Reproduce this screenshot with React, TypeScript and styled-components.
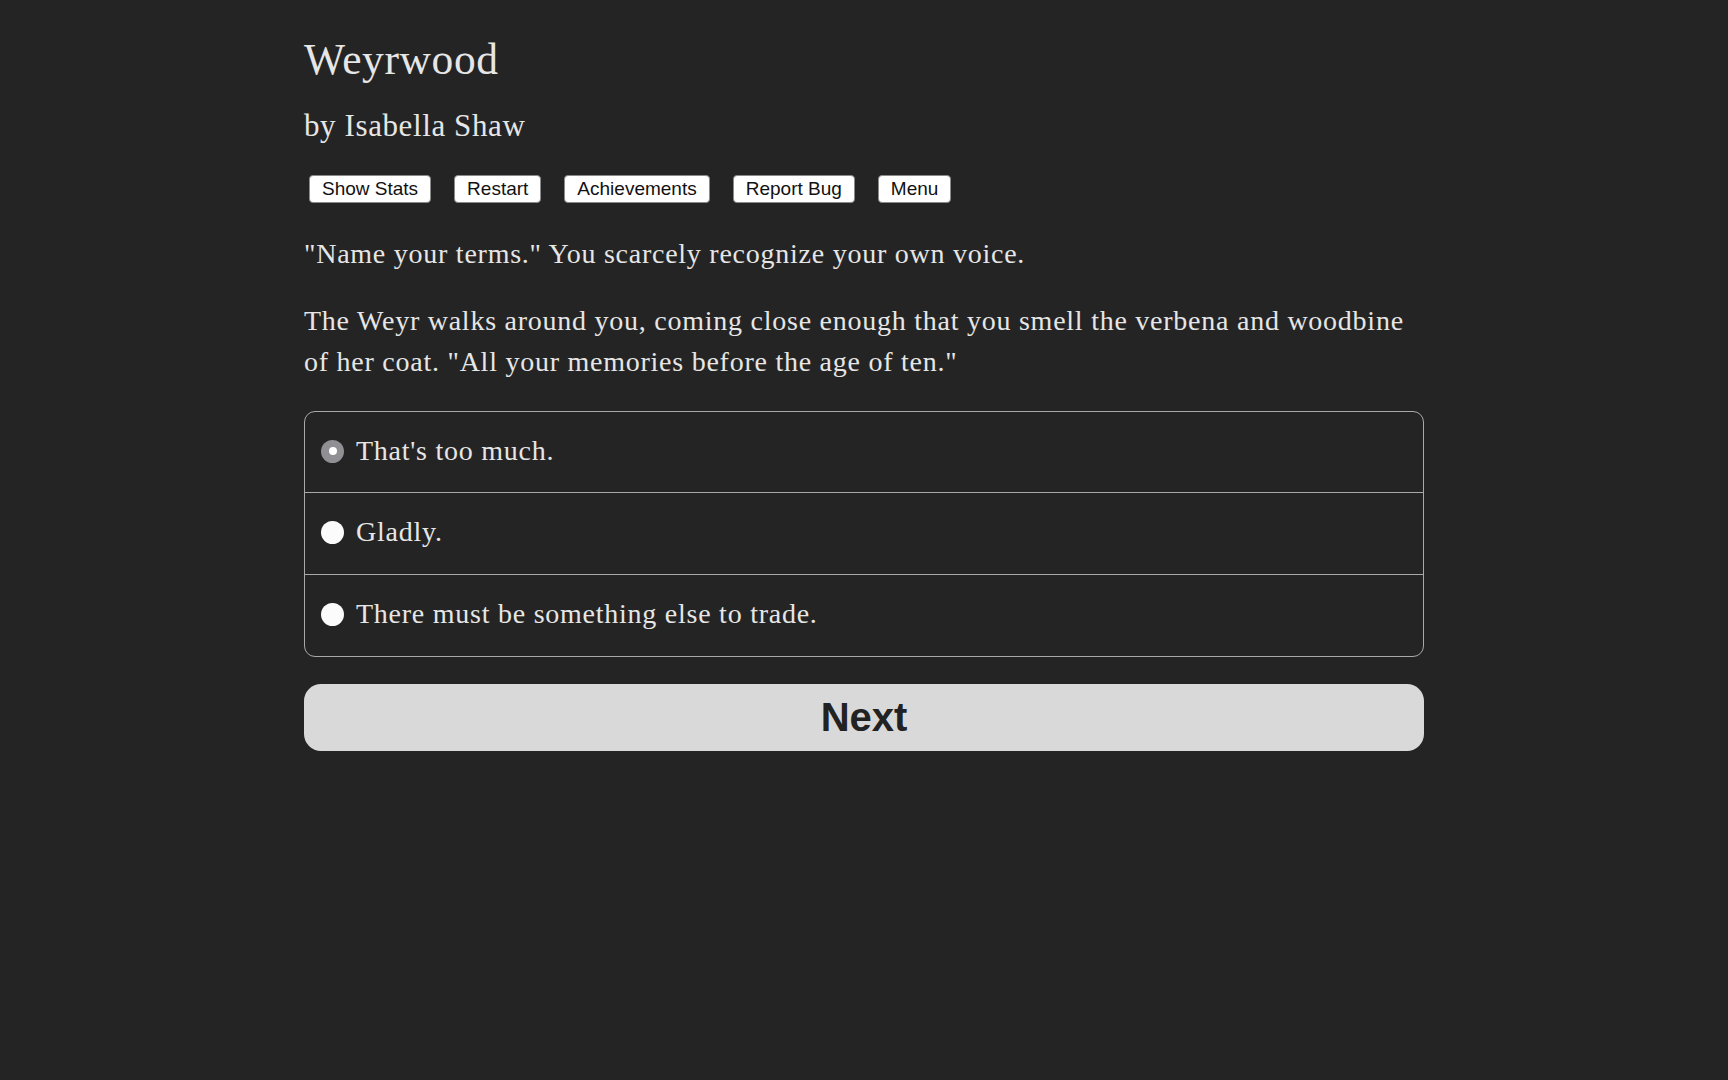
import { useState } from 'react'
import styled, { createGlobalStyle } from 'styled-components'

const GlobalStyle = createGlobalStyle`
  html, body {
    margin: 0;
    padding: 0;
    background-color: #242424;
  }
`

const Page = styled.div`
  width: 1120px;
  margin: 0 auto;
  padding-top: 34px;
  color: #e6e6e6;
  font-family: 'Liberation Serif', 'Times New Roman', serif;
`

const Title = styled.h1`
  margin: 0;
  font-size: 43.5px;
  font-weight: normal;
  line-height: 50px;
  letter-spacing: 0.6px;
`

const Author = styled.h2`
  margin: 24px 0 0;
  font-size: 31px;
  font-weight: normal;
  line-height: 35px;
  letter-spacing: 0.6px;
`

const Toolbar = styled.div`
  display: flex;
  gap: 23px;
  margin: 32px 0 0 5px;
`

const ToolButton = styled.button`
  height: 28px;
  padding: 0 12px;
  background-color: #fff;
  color: #111;
  border: 1px solid #8a8a8a;
  border-radius: 4px;
  font-family: 'Liberation Sans', Arial, sans-serif;
  font-size: 19px;
  line-height: 26px;
  cursor: pointer;
`

const Paragraph = styled.p`
  margin: 31px 0 0;
  font-size: 28px;
  line-height: 40.7px;
  letter-spacing: 0.75px;

  & + & {
    margin-top: 26.5px;
  }
`

const ChoiceList = styled.div`
  margin-top: 28px;
  border: 1px solid #a9a9a9;
  border-radius: 11px;
  overflow: hidden;
`

const ChoiceRow = styled.label`
  display: flex;
  align-items: flex-start;
  gap: 12px;
  padding: 19px 16px 21px;
  font-size: 28px;
  line-height: 40.7px;
  letter-spacing: 0.75px;
  cursor: pointer;

  & + & {
    border-top: 1px solid #a9a9a9;
  }
`

const Radio = styled.span<{ checked?: boolean }>`
  flex: none;
  width: 23px;
  height: 23px;
  margin-top: 9px;
  border-radius: 50%;
  box-sizing: border-box;
  background-color: ${({ checked }) => (checked ? '#8f8f94' : '#fbfbfb')};
  display: flex;
  align-items: center;
  justify-content: center;

  &::after {
    content: '';
    width: 8px;
    height: 8px;
    border-radius: 50%;
    background-color: #fff;
    display: ${({ checked }) => (checked ? 'block' : 'none')};
  }
`

const NextButton = styled.button`
  display: block;
  width: 100%;
  height: 67px;
  margin-top: 27px;
  background-color: #d9d9d9;
  color: #222;
  border: none;
  border-radius: 17px;
  font-family: 'Liberation Sans', Arial, sans-serif;
  font-size: 40px;
  font-weight: bold;
  cursor: pointer;
`

const CHOICES = [
  "That's too much.",
  'Gladly.',
  'There must be something else to trade.',
]

const TOOLS = ['Show Stats', 'Restart', 'Achievements', 'Report Bug', 'Menu']

function App() {
  const [selected, setSelected] = useState(0)

  return (
    <>
      <GlobalStyle />
      <Page>
        <Title>Weyrwood</Title>
        <Author>by Isabella Shaw</Author>
        <Toolbar>
          {TOOLS.map((t) => (
            <ToolButton key={t}>{t}</ToolButton>
          ))}
        </Toolbar>
        <Paragraph>"Name your terms." You scarcely recognize your own voice.</Paragraph>
        <Paragraph>
          The Weyr walks around you, coming close enough that you smell the verbena and woodbine
          of her coat. "All your memories before the age of ten."
        </Paragraph>
        <ChoiceList>
          {CHOICES.map((c, idx) => (
            <ChoiceRow key={c} onClick={() => setSelected(idx)}>
              <Radio checked={selected === idx} />
              {c}
            </ChoiceRow>
          ))}
        </ChoiceList>
        <NextButton>Next</NextButton>
      </Page>
    </>
  )
}

export default App
